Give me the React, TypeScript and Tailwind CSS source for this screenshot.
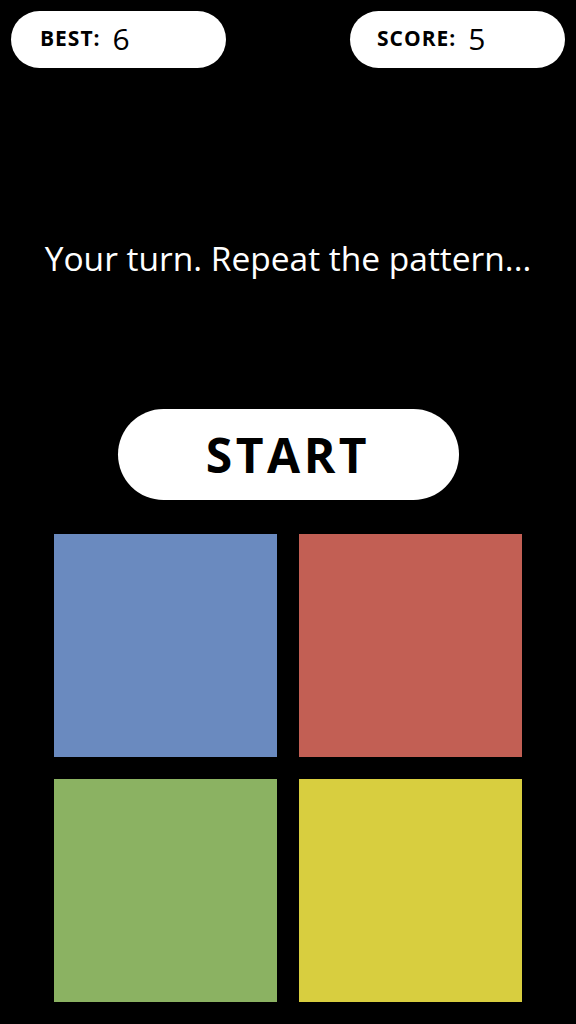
const PADS = [
  { key: 'blue', color: 'bg-[#6a8abf]' },
  { key: 'red', color: 'bg-[#c25f54]' },
  { key: 'green', color: 'bg-[#8bb262]' },
  { key: 'yellow', color: 'bg-[#d8ce3f]' },
]

function ScorePill({ label, value, padLeft }: { label: string; value: number; padLeft: string }) {
  return (
    <div className={`w-[215px] h-[57px] rounded-full bg-white flex items-center pb-[2px] ${padLeft}`}>
      <span className="text-[21px] font-bold tracking-[1px] text-black">{label}</span>
      <span className="ml-[12px] text-[30px] text-black leading-none">{value}</span>
    </div>
  )
}

export default function App() {
  return (
    <div
      className="w-[576px] h-[1024px] bg-black overflow-hidden"
      style={{ fontFamily: '"Open Sans", "Noto Sans", sans-serif' }}
    >
      <div className="flex justify-between px-[11px] pt-[11px]">
        <ScorePill label="BEST:" value={6} padLeft="pl-[29px]" />
        <ScorePill label="SCORE:" value={5} padLeft="pl-[27px]" />
      </div>

      <p className="mt-[170px] h-[40px] leading-[40px] text-center text-white text-[33.5px] font-medium">
        Your turn. Repeat the pattern...
      </p>

      <button className="block mx-auto mt-[131px] w-[341px] h-[91px] rounded-full bg-white text-black text-[48px] font-bold tracking-[3.5px] leading-none">
        START
      </button>

      <div className="grid grid-cols-[223px_223px] gap-[22px] pl-[54px] mt-[34px]">
        {PADS.map((p) => (
          <div key={p.key} className={`w-[223px] h-[223px] ${p.color}`} />
        ))}
      </div>
    </div>
  )
}
